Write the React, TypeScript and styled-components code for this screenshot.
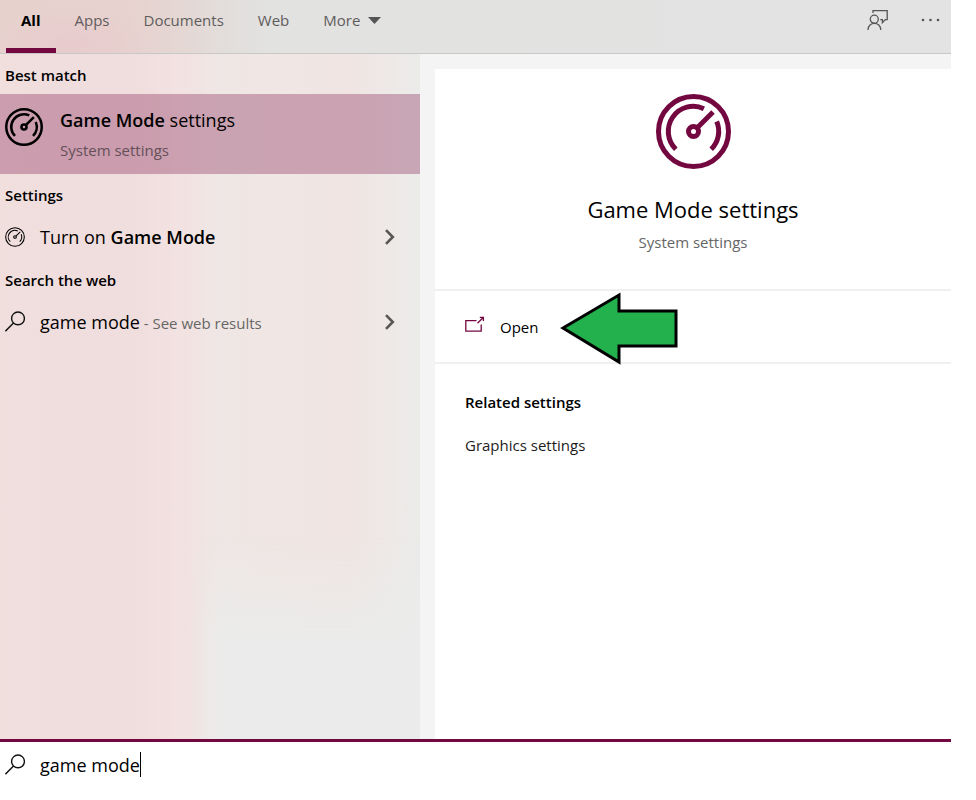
import React, { useState } from "react";
import styled, { createGlobalStyle } from "styled-components";

const accent = "#730840";

const GlobalStyle = createGlobalStyle`
  *, *::before, *::after { box-sizing: border-box; }
  body { margin: 0; background: #fff; }
  button, input { font: inherit; color: inherit; }
  h1, h2, p, ul { margin: 0; padding: 0; }
  svg { display: block; flex: none; }
`;

const Page = styled.div`
  display: flex;
  flex-direction: column;
  min-height: 100vh;
  margin-right: 25px;
  font-family: "Open Sans", "Noto Sans", sans-serif;
  font-size: 15px;
  line-height: 20px;
  color: #000;
`;

const Header = styled.header`
  display: flex;
  justify-content: space-between;
  height: 54px;
  border-bottom: 1px solid #c9c8c8;
  background:
    radial-gradient(ellipse 80px 38px at 72px 44px, #e8cbcd 0%, #e8cbcd00 100%),
    linear-gradient(90deg, #e7d1cd 0, #e7d2cf 130px, #e4d7d4 185px, #e2dddb 220px, #e2e2e1 270px, #e3e3e3 100%);
`;

const Tabs = styled.nav`
  display: flex;
  gap: 4px;
  padding-left: 6px;
`;

const Tab = styled.button<{ $active?: boolean }>`
  display: flex;
  align-items: flex-start;
  gap: 8px;
  padding: 10px 15px 0;
  border: 0;
  border-bottom: 5px solid ${(p) => (p.$active ? accent : "transparent")};
  background: none;
  font-weight: ${(p) => (p.$active ? 700 : 400)};
  color: ${(p) => (p.$active ? "#000" : "#5f5c5c")};
`;

const Caret = styled.svg`
  margin-top: 7px;
`;

const Actions = styled.div`
  display: flex;
  align-items: flex-start;
  gap: 32px;
  padding: 9px 11px 0 0;
`;

const IconButton = styled.button`
  display: flex;
  padding: 0;
  border: 0;
  background: none;
  color: #555;
`;

const Body = styled.main`
  display: grid;
  grid-template-columns: minmax(0, 420px) minmax(0, 1fr);
  flex: 1;
`;

const Results = styled.section`
  position: relative;
  isolation: isolate;
  background: linear-gradient(90deg, #f1dfde 0, #f0dddd 60px, #f0dddd 125px, #f2e2e1 180px, #efe7e5 220px, #f0e6e4 270px, #f0e5e3 350px, #edeae8 400px, #ebebea 100%);

  &::after {
    content: "";
    position: absolute;
    inset: 480px 0 0 190px;
    z-index: -1;
    background: linear-gradient(90deg, #eaebea00 0, #eaebea 32px);
    mask-image: linear-gradient(180deg, transparent 0, #000 110px);
  }
`;

const GroupTitle = styled.h2`
  padding: 11px 5px 9px;
  font-size: 15px;
  line-height: 20px;
  font-weight: 600;
`;

const BestMatch = styled.button`
  display: flex;
  gap: 17px;
  width: 100%;
  height: 80px;
  padding: 14px 5px;
  border: 0;
  background: rgba(116, 6, 63, 0.3);
  text-align: left;
`;

const Stack = styled.span`
  display: flex;
  flex-direction: column;
  gap: 8px;
`;

const Large = styled.span`
  font-size: 18px;
  line-height: 24px;
`;

const Strong = styled.strong`
  font-weight: 600;
`;

const Muted = styled.span`
  color: #666;
`;

const MatchNote = styled.span`
  color: #65505a;
`;

const ResultRow = styled.button`
  display: flex;
  align-items: center;
  gap: 15px;
  width: 100%;
  height: 45px;
  padding: 0 24px 0 5px;
  border: 0;
  background: none;
  text-align: left;
`;

const RowText = styled.span`
  flex: 1;
  white-space: nowrap;
`;

const DetailPane = styled.section`
  padding: 15px 0 0 15px;
  background: #f4f4f4;
`;

const Detail = styled.div`
  height: 100%;
  background: #fff;
`;

const Hero = styled.div`
  display: flex;
  flex-direction: column;
  align-items: center;
  padding: 25px 0 37px;
`;

const HeroTitle = styled.h1`
  margin: 25px 0 8px;
  font-size: 22px;
  line-height: 30px;
  font-weight: 400;
`;

const OpenBar = styled.div`
  position: relative;
  border: solid #f0f0f0;
  border-width: 2px 0;
`;

const OpenButton = styled.button`
  display: flex;
  align-items: center;
  gap: 15px;
  width: 100%;
  height: 71px;
  padding: 0 30px;
  border: 0;
  background: none;
`;

const Pointer = styled.svg`
  position: absolute;
  top: 1px;
  left: 125px;
`;

const Related = styled.div`
  display: flex;
  flex-direction: column;
  align-items: flex-start;
  gap: 23px;
  padding: 28px 30px;
`;

const RelatedTitle = styled.h2`
  font-size: 15px;
  line-height: 20px;
  font-weight: 600;
`;

const RelatedLink = styled.a`
  color: #1c1c1c;
  text-decoration: none;
`;

const SearchBar = styled.label`
  display: flex;
  align-items: center;
  height: 61px;
  padding: 0 5px 13px;
  border-top: 3px solid ${accent};
  background: #fff;
`;

const SearchInput = styled.input`
  field-sizing: content;
  height: 26px;
  margin-left: 15px;
  padding: 0;
  border: 0;
  outline: 0;
  background: none;
  font-size: 18px;
  line-height: 26px;
  caret-color: transparent;
`;

const TextCursor = styled.span`
  width: 1px;
  height: 25px;
  background: #000;
`;

const Gauge = ({ size, stroke = 5 }: { size: number; stroke?: number }) => (
  <svg width={size} height={size} viewBox="-37.5 -37.5 75 75" fill="none" stroke="currentColor" strokeWidth={stroke} aria-hidden="true">
    <circle r="35" />
    <path d="M-17.7 17.7A25 25 0 0 1 10.4 -22.8" />
    <path d="M23.2 -10A25 25 0 0 1 17.7 17.7" />
    <circle r="5" />
    <path d="M3.5 -3.5L19.5 -19.5" />
  </svg>
);

const SearchIcon = () => (
  <svg width="20" height="21" viewBox="0 0 20 21" fill="none" stroke="#111" strokeWidth="1.4" aria-hidden="true">
    <circle cx="13" cy="7.4" r="6.4" />
    <path d="M8.5 12L.4 20.2" />
  </svg>
);

const Chevron = () => (
  <svg width="12" height="16" viewBox="0 0 12 16" fill="none" stroke="#595656" strokeWidth="2.6" aria-hidden="true">
    <path d="M2 1.2L8.8 8L2 14.8" />
  </svg>
);

const HeroIcon = styled.div`
  color: ${accent};
`;

export default function App() {
  const [query, setQuery] = useState("game mode");
  return (
    <>
      <GlobalStyle />
      <Page>
        <Header>
          <Tabs>
            <Tab $active>All</Tab>
            <Tab>Apps</Tab>
            <Tab>Documents</Tab>
            <Tab>Web</Tab>
            <Tab>
              More
              <Caret width="13" height="7" viewBox="0 0 13 7" fill="#555" aria-hidden="true">
                <path d="M0 0H13L6.5 7Z" />
              </Caret>
            </Tab>
          </Tabs>
          <Actions>
            <IconButton aria-label="Feedback">
              <svg width="22" height="22" viewBox="0 0 22 22" fill="none" stroke="currentColor" strokeWidth="1.3">
                <path d="M6 4V1.6H20.2V10.6H18.4L15.4 13.6V10.6H13.3" />
                <circle cx="7.3" cy="10.2" r="4" />
                <path d="M1 21C1 12.2 13.8 12.2 13.8 21" />
              </svg>
            </IconButton>
            <IconButton aria-label="Options">
              <svg width="19" height="22" viewBox="0 0 19 22" fill="currentColor">
                <circle cx="2" cy="11" r="1.3" />
                <circle cx="9.5" cy="11" r="1.3" />
                <circle cx="17" cy="11" r="1.3" />
              </svg>
            </IconButton>
          </Actions>
        </Header>
        <Body>
          <Results>
            <GroupTitle>Best match</GroupTitle>
            <BestMatch>
              <Gauge size={38} />
              <Stack>
                <Large><Strong>Game Mode</Strong> settings</Large>
                <MatchNote>System settings</MatchNote>
              </Stack>
            </BestMatch>
            <GroupTitle>Settings</GroupTitle>
            <ResultRow>
              <Gauge size={20} stroke={4} />
              <RowText><Large>Turn on <Strong>Game Mode</Strong></Large></RowText>
              <Chevron />
            </ResultRow>
            <GroupTitle>Search the web</GroupTitle>
            <ResultRow>
              <SearchIcon />
              <RowText><Large>game mode</Large><Muted> - See web results</Muted></RowText>
              <Chevron />
            </ResultRow>
          </Results>
          <DetailPane>
            <Detail>
              <Hero>
                <HeroIcon><Gauge size={75} /></HeroIcon>
                <HeroTitle>Game Mode settings</HeroTitle>
                <Muted>System settings</Muted>
              </Hero>
              <OpenBar>
                <OpenButton>
                  <svg width="20" height="22" viewBox="0 0 20 22" fill="none" stroke={accent} strokeWidth="1.3" aria-hidden="true">
                    <path d="M11.5 4.6H.8V15.2H16.2V8.5" />
                    <path d="M12.5 7.2L18 1.7M14.8 1.4H18.4V5" />
                  </svg>
                  Open
                </OpenButton>
                <Pointer width="120" height="74" viewBox="0 0 120 74" fill="#22b14c" stroke="#000" strokeWidth="3" aria-hidden="true">
                  <path d="M3 36L59 3V19H116V54H59V70Z" />
                </Pointer>
              </OpenBar>
              <Related>
                <RelatedTitle>Related settings</RelatedTitle>
                <RelatedLink href="#graphics">Graphics settings</RelatedLink>
              </Related>
            </Detail>
          </DetailPane>
        </Body>
        <SearchBar>
          <SearchIcon />
          <SearchInput aria-label="Search" value={query} onChange={(e) => setQuery(e.target.value)} />
          <TextCursor />
        </SearchBar>
      </Page>
    </>
  );
}
